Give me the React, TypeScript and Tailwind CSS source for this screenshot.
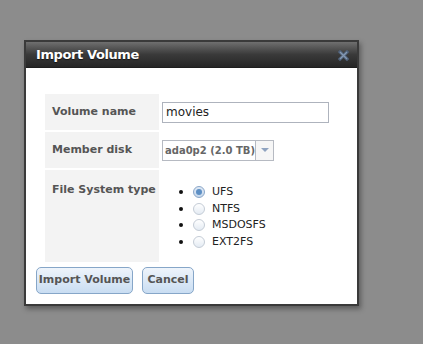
import { useState } from 'react'

const fsTypes = ['UFS', 'NTFS', 'MSDOSFS', 'EXT2FS']

export default function App() {
    const [name, setName] = useState('movies')
    const [fsType, setFsType] = useState('UFS')

    return (
        <div className="w-[423px] h-[344px] bg-[#8c8c8c] pt-[40px] pl-[24px] font-['DejaVu_Sans',Verdana,sans-serif] overflow-hidden">
            <div className="w-[335px] h-[266px] border-2 border-[#3a3a3a] bg-white flex flex-col shadow-[2px_3px_5px_rgba(0,0,0,0.35)]">
                {/* title bar */}
                <div className="h-[26px] flex items-center justify-between pl-[10px] pr-[8px] bg-gradient-to-b from-[#707070] via-[#3a3a3a] to-[#262626] border-b border-[#1e1e1e]">
                    <span className="text-white font-bold text-[13px] leading-none tracking-[-0.4px] [text-shadow:0_1px_1px_rgba(0,0,0,0.6)]">
                        Import Volume
                    </span>
                    <svg width="11" height="11" viewBox="0 0 11 11" className="mt-[1px]">
                        <path d="M2 2 L9 9 M9 2 L2 9" stroke="#4f6179" strokeWidth="3.2" strokeLinecap="square" />
                        <path d="M2 2 L9 9 M9 2 L2 9" stroke="#8498b2" strokeWidth="1.4" />
                    </svg>
                </div>

                {/* body */}
                <div className="flex-1 pt-[26px] pl-[19px]">
                    <div className="flex flex-col gap-[2px]">
                        <div className="flex h-[36px]">
                            <div className="w-[114px] bg-[#f3f3f3] flex items-center pl-[7px] text-[11px] font-bold text-[#555] whitespace-nowrap">
                                Volume name
                            </div>
                            <div className="flex items-center pl-[3px]">
                                <input
                                    value={name}
                                    onChange={(e) => setName(e.target.value)}
                                    className="w-[167px] h-[21px] border border-[#aeb3bd] px-[3px] text-[12px] text-[#222] outline-none font-['DejaVu_Sans',Verdana,sans-serif]"
                                />
                            </div>
                        </div>

                        <div className="flex h-[36px]">
                            <div className="w-[114px] bg-[#f3f3f3] flex items-center pl-[7px] text-[11px] font-bold text-[#555] whitespace-nowrap">
                                Member disk
                            </div>
                            <div className="flex items-center pl-[3px]">
                                <div className="h-[21px] w-[112px] border border-[#b6bac2] flex items-stretch bg-white">
                                    <span className="flex-1 flex items-center pl-[2px] text-[10px] font-bold text-[#666] whitespace-nowrap">
                                        ada0p2 (2.0 TB)
                                    </span>
                                    <span className="w-[19px] border-l border-[#b6bac2] flex items-center justify-center bg-[#f6f6f6]">
                                        <span className="w-0 h-0 border-l-[4px] border-r-[4px] border-t-[4px] border-l-transparent border-r-transparent border-t-[#8fa3c0]" />
                                    </span>
                                </div>
                            </div>
                        </div>

                        <div className="flex h-[92px]">
                            <div className="w-[114px] bg-[#f3f3f3] pl-[7px] pt-[12px] text-[11px] font-bold text-[#555] whitespace-nowrap">
                                File System type
                            </div>
                            <ul className="pl-[20px] pt-[14px]">
                                {fsTypes.map((t) => (
                                    <li key={t} className="h-[16.6px] flex items-center text-[11px] text-[#222]">
                                        <span className="w-[4px] h-[4px] rounded-full bg-[#111] mr-[10px]" />
                                        <button
                                            onClick={() => setFsType(t)}
                                            className={
                                                fsType === t
                                                    ? 'w-[12px] h-[12px] rounded-full border border-[#8aa6c8] bg-gradient-to-b from-[#dfe9f5] to-[#c6d8ec] flex items-center justify-center mr-[7px]'
                                                    : 'w-[12px] h-[12px] rounded-full border border-[#c4ccd6] bg-gradient-to-b from-[#ffffff] to-[#e4ebf3] mr-[7px]'
                                            }
                                        >
                                            {fsType === t && (
                                                <span className="w-[6px] h-[6px] rounded-full bg-[#5d8fc4]" />
                                            )}
                                        </button>
                                        {t}
                                    </li>
                                ))}
                            </ul>
                        </div>
                    </div>

                    <div className="flex gap-[9px] mt-[5px] -ml-[9px]">
                        <button className="w-[97px] h-[27px] rounded-[5px] border border-[#86a6c8] bg-gradient-to-b from-[#eef4fb] to-[#c9ddf2] text-[11px] font-bold text-[#555]">
                            Import Volume
                        </button>
                        <button className="w-[52px] h-[27px] rounded-[5px] border border-[#86a6c8] bg-gradient-to-b from-[#eef4fb] to-[#c9ddf2] text-[11px] font-bold text-[#555]">
                            Cancel
                        </button>
                    </div>
                </div>
            </div>
        </div>
    )
}
